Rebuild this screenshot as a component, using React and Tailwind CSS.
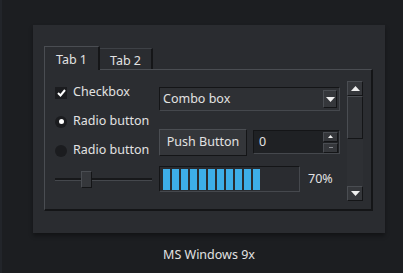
import React from 'react';

const raised = 'border border-t-[#4a4d52] border-l-[#4a4d52] border-r-[#141517] border-b-[#141517]';
const sunken = 'border border-t-[#141517] border-l-[#141517] border-r-[#45484d] border-b-[#45484d]';

const Tri = ({ up, size = 5 }) => (
  <svg width={size * 2 - 1} height={size} viewBox="0 0 9 5">
    {up ? <path d="M0 5 L4.5 0 L9 5 Z" fill="#f0f0f0" /> : <path d="M0 0 L9 0 L4.5 5 Z" fill="#f0f0f0" />}
  </svg>
);

const App = () => {
  const chunks = Array.from({ length: 11 });

  return (
    <div
      className="w-[403px] h-[273px] bg-[#1c1e21] border-l-2 border-l-[#22252a] overflow-hidden text-[#e2e2e2] text-[12.5px]"
      style={{ fontFamily: '"Noto Sans", "Open Sans", sans-serif' }}
    >
      <div className="pt-[25px] pl-[31px] flex flex-col items-start">
        <div className="w-[352px] h-[208px] bg-[#2a2c30] shadow-[0_3px_4px_rgba(0,0,0,0.35)] pt-[20px] pl-[11px]">
          {/* tab bar */}
          <div className="flex items-end h-[24px]">
            <div className="w-[56px] h-[24px] bg-[#2b2d31] border-t border-l border-t-[#4a4d52] border-l-[#4a4d52] border-r-2 border-r-[#151618] flex items-center justify-center relative z-10 -mb-px">
              <span className="leading-none pt-[3px]">Tab 1</span>
            </div>
            <div className="w-[53px] h-[21px] bg-[#2a2c30] border-t border-t-[#3e4146] border-r-2 border-r-[#151618] flex items-center justify-center">
              <span className="leading-none pt-[4px]">Tab 2</span>
            </div>
          </div>
          {/* pane */}
          <div className="w-[329px] h-[142px] bg-[#2b2d31] border border-t-[#4a4d52] border-l-[#4a4d52] border-r-2 border-b-2 border-r-[#141517] border-b-[#141517] flex pl-[10px]">
            {/* left column */}
            <div className="w-[98px] flex flex-col pt-[8px]">
              <div className="h-[29px] flex items-center gap-[6px]">
                <div className="w-[12px] h-[12px] bg-[#1b1c1f] flex items-center justify-center">
                  <svg width="9" height="8" viewBox="0 0 9 8">
                    <path d="M1 4 L3.5 6.5 L8 1" stroke="#ffffff" strokeWidth="2" fill="none" />
                  </svg>
                </div>
                <span>Checkbox</span>
              </div>
              <div className="h-[29px] flex items-center gap-[6px]">
                <div className="w-[12px] h-[12px] rounded-full bg-[#1b1c1f] flex items-center justify-center">
                  <div className="w-[5px] h-[5px] rounded-full bg-white" />
                </div>
                <span>Radio button</span>
              </div>
              <div className="h-[29px] flex items-center gap-[6px]">
                <div className="w-[12px] h-[12px] rounded-full bg-[#1b1c1f]" />
                <span>Radio button</span>
              </div>
              <div className="h-[29px] flex items-center relative">
                <div className="w-[97px] h-[3px] border-t-2 border-t-[#17181a] border-b border-b-[#45484d]" />
                <div className={`absolute left-[26px] top-[6px] w-[11px] h-[17px] bg-[#35373b] ${raised}`} />
              </div>
            </div>
            {/* middle column */}
            <div className="w-[181px] ml-[6px] flex flex-col pt-[17px]">
              <div className={`h-[24px] bg-[#2e3034] ${sunken} flex items-center justify-between pl-[3px] pr-[2px]`}>
                <span>Combo box</span>
                <div className={`w-[14px] h-[18px] bg-[#35373b] ${raised} flex items-center justify-center`}>
                  <Tri />
                </div>
              </div>
              <div className="flex mt-[18px] gap-[6px]">
                <div className={`w-[88px] h-[27px] bg-[#34363a] ${raised} flex items-center justify-center`}>
                  <span>Push Button</span>
                </div>
                <div className={`w-[87px] h-[24px] mt-[1px] bg-[#1f2124] ${sunken} flex items-center justify-between pl-[5px] pr-[1px]`}>
                  <span>0</span>
                  <div className="flex flex-col gap-[1px]">
                    <div className={`w-[15px] h-[10px] bg-[#35373b] ${raised} flex items-center justify-center`}>
                      <Tri up size={3} />
                    </div>
                    <div className={`w-[15px] h-[10px] bg-[#35373b] ${raised} flex items-center justify-center`}>
                      <div className="w-[4px] h-px bg-[#8a8d92]" />
                    </div>
                  </div>
                </div>
              </div>
              <div className="flex items-center mt-[10px]">
                <div className={`w-[141px] h-[26px] bg-[#2a2c30] ${sunken} flex items-center gap-[2px] pl-[3px]`}>
                  {chunks.map((_, i) => (
                    <div key={i} className="w-[7px] h-[21px] bg-[#3daee9]" />
                  ))}
                </div>
                <span className="ml-[8px]">70%</span>
              </div>
            </div>
            {/* scrollbar */}
            <div className="ml-[7px] mt-[11px] w-[16px] h-[120px] bg-[#2e3034] flex flex-col">
              <div className={`h-[15px] bg-[#35373b] ${raised} flex items-center justify-center`}>
                <Tri up />
              </div>
              <div className={`h-[43px] bg-[#2f3135] ${raised}`} />
              <div className="flex-1" />
              <div className={`h-[15px] bg-[#35373b] ${raised} flex items-center justify-center`}>
                <Tri />
              </div>
            </div>
          </div>
        </div>
        <div className="w-[352px] text-center mt-[13px] text-[12.5px]">MS Windows 9x</div>
      </div>
    </div>
  );
};

export default App;
